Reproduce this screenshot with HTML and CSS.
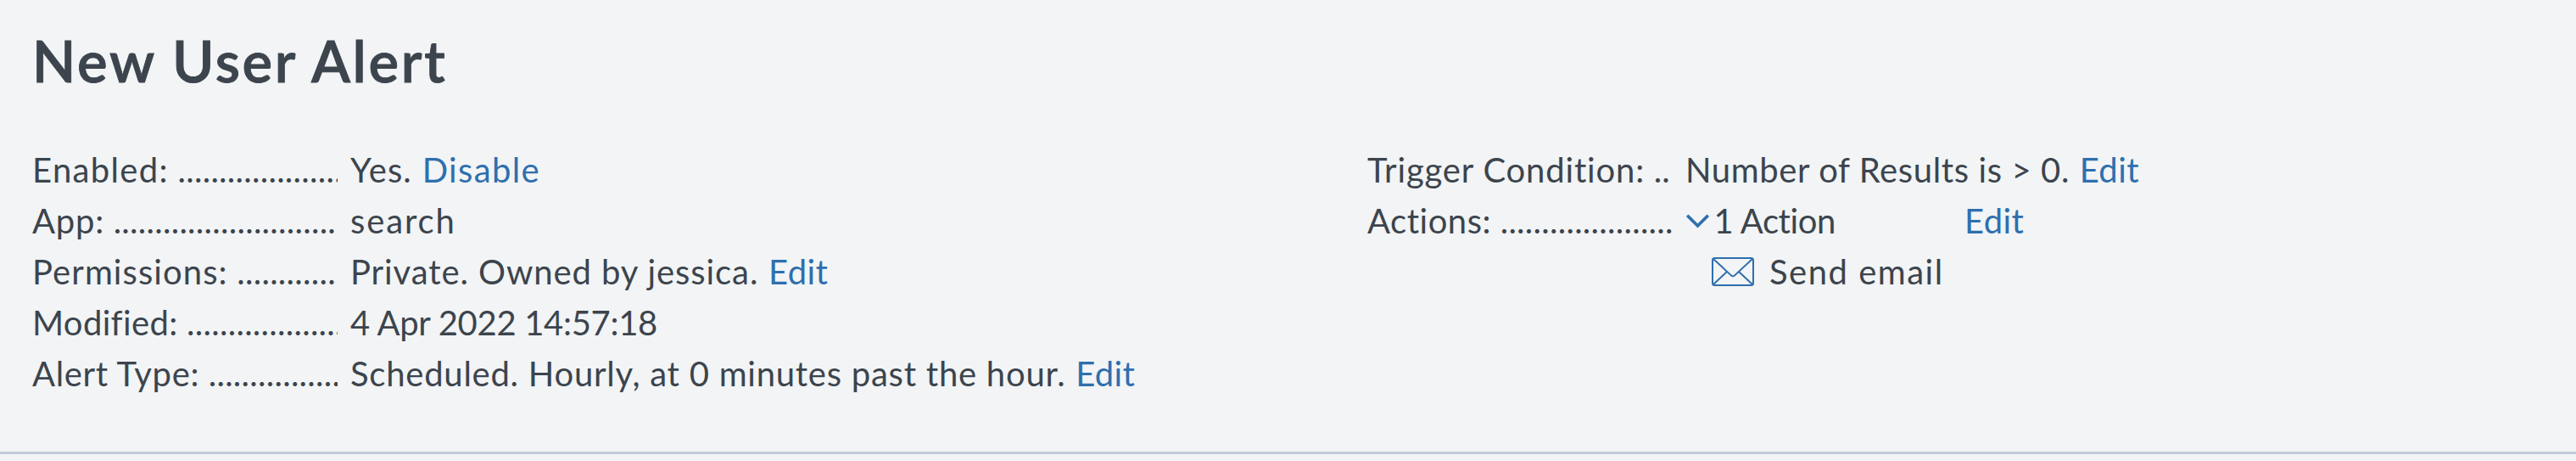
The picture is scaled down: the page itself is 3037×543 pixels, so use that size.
FILE: index.html
```html
<!DOCTYPE html>
<html lang="en">
<head>
<meta charset="utf-8">
<title>New User Alert</title>
<link rel="stylesheet" href="styles.css">
</head>
<body>
<header class="alert-header">
  <h1 class="title">New User Alert</h1>
  <div class="columns">
    <dl class="details">
      <dt class="label"><span class="t-enabled">Enabled:</span><span class="dots">....................</span></dt>
      <dd class="value"><span class="t-yes">Yes.</span> <a class="link t-disable">Disable</a></dd>
      <dt class="label"><span class="t-app">App:</span><span class="dots">...........................</span></dt>
      <dd class="value"><span class="t-search">search</span></dd>
      <dt class="label"><span class="t-perm">Permissions:</span><span class="dots">.............</span></dt>
      <dd class="value"><span class="t-private">Private. Owned by jessica.</span> <a class="link">Edit</a></dd>
      <dt class="label"><span class="t-modified">Modified:</span><span class="dots">...................</span></dt>
      <dd class="value"><span class="t-date">4 Apr 2022 14:57:18</span></dd>
      <dt class="label"><span class="t-type">Alert Type:</span><span class="dots">................</span></dt>
      <dd class="value"><span class="t-schedule">Scheduled. Hourly, at 0 minutes past the hour.</span> <a class="link">Edit</a></dd>
    </dl>
    <dl class="details">
      <dt class="label"><span class="t-trigger">Trigger Condition:</span><span class="dots">..</span></dt>
      <dd class="value"><span class="t-number">Number of Results is &gt; 0.</span> <a class="link">Edit</a></dd>
      <dt class="label"><span class="t-actions">Actions:</span><span class="dots">.....................</span></dt>
      <dd class="value actions">
        <div class="action-summary">
          <svg class="chevron" viewBox="0 0 30 18" aria-hidden="true"><path d="M2.2 2.7 14.5 15 26.8 2.7"/></svg>
          <span class="t-count">1 Action</span>
        </div>
        <a class="link action-edit">Edit</a>
      </dd>
      <dd class="value action-item">
        <svg class="envelope" viewBox="0 0 50 34" aria-hidden="true">
          <rect x="1" y="1" width="48" height="32" rx="2.5"/>
          <path d="M2 2 22.6 21.1Q25 23.6 27.4 21.1L48 2M2 32 18 17M48 32 32 17"/>
        </svg>
        <span class="t-email">Send email</span>
      </dd>
    </dl>
  </div>
</header>
</body>
</html>
```
FILE: styles.css
```css
body {
  margin: 0;
  background: #f2f4f5;
  color: #3c444d;
  font-family: Lato, "Open Sans", sans-serif;
  font-size: 40px;
  line-height: 60px;
}

.alert-header {
  padding: 31px 38px 62px;
  border-bottom: 3px solid #c3cbd9;
}

.title {
  margin: 0 0 59px;
  font-size: 67px;
  line-height: 80px;
  font-weight: 600;
  letter-spacing: 2.7px;
  -webkit-text-stroke: 0.9px currentColor;
}

.columns {
  display: grid;
  grid-template-columns: 1574px 1fr;
}

.details {
  display: grid;
  grid-template-columns: 360px 1fr;
  grid-auto-rows: 60px;
  column-gap: 15px;
  align-content: start;
  margin: 0;
}

.label {
  display: flex;
  gap: 10.6px;
  overflow: hidden;
  white-space: nowrap;
}

.dots { letter-spacing: 0.28px; }

.value {
  margin: 0;
  white-space: nowrap;
}

.link {
  margin-left: 1.5px;
  color: #2f6fae;
  letter-spacing: 0.4px;
  text-decoration: none;
}

.actions { display: flex; }

.action-edit { margin-left: 0; }

.action-summary {
  display: flex;
  align-items: center;
  width: 329px;
}

.chevron {
  width: 30px;
  height: 18px;
  margin: 0 3.5px 0 0;
  fill: none;
  stroke: #2f6fae;
  stroke-width: 3.6;
}

.action-item {
  grid-column: 2;
  display: flex;
  align-items: center;
  gap: 18px;
  padding-left: 31px;
}

.envelope {
  width: 50px;
  height: 34px;
  fill: none;
  stroke: #2f6fae;
  stroke-width: 2;
}

/* Tracking for each run of text */
.t-enabled { letter-spacing: 1.35px; }
.t-app { letter-spacing: 0.8px; }
.t-perm { letter-spacing: 1.08px; }
.t-modified { letter-spacing: 0.35px; }
.t-type { letter-spacing: 0.66px; }
.t-trigger { letter-spacing: 0.84px; }
.t-actions { letter-spacing: 0.52px; }
.t-yes { letter-spacing: 1.1px; }
.t-disable { letter-spacing: 1.38px; }
.t-search { letter-spacing: 1.86px; }
.t-private { letter-spacing: 0.92px; }
.t-date { letter-spacing: -0.3px; }
.t-schedule { letter-spacing: 0.76px; }
.t-number { letter-spacing: 0.61px; }
.t-count { letter-spacing: -0.42px; }
.t-email { letter-spacing: 1.5px; }
```
